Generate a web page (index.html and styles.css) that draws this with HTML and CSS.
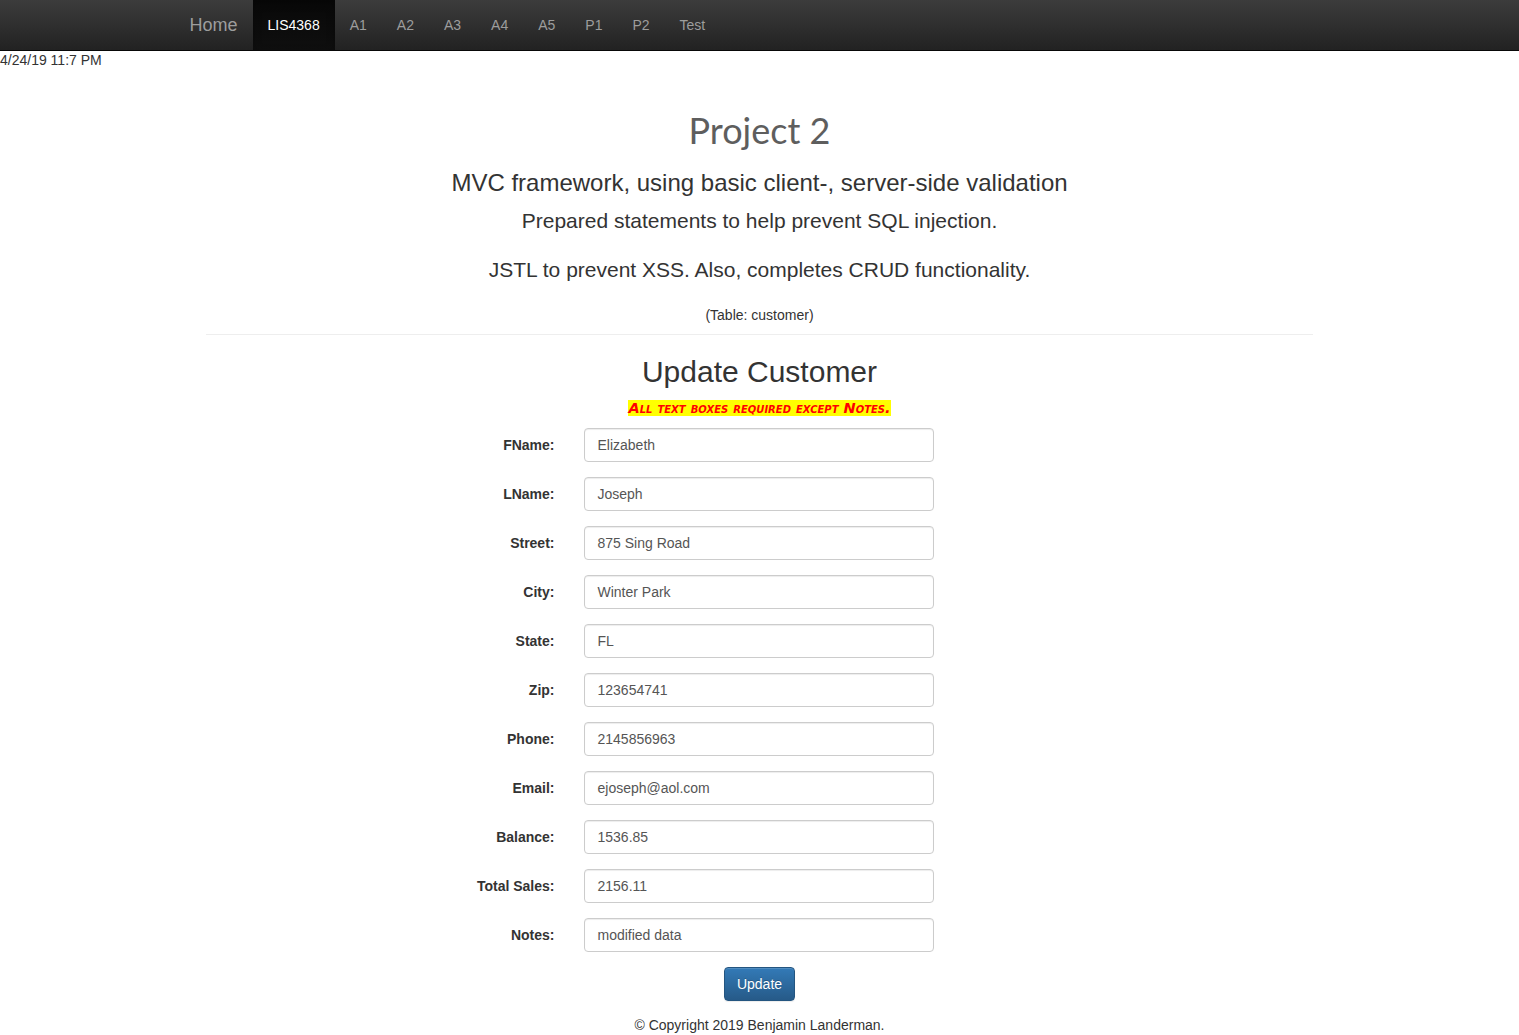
FILE: index.html
```html
<!DOCTYPE html>
<html lang="en">
<head>
<meta charset="utf-8">
<title>Project 2 - Update Customer</title>
<link rel="stylesheet" href="styles.css">
</head>
<body>
<nav class="navbar">
  <div class="container nav-inner">
    <a class="brand" href="#">Home</a>
    <ul class="nav">
      <li class="active"><a href="#">LIS4368</a></li>
      <li><a href="#">A1</a></li>
      <li><a href="#">A2</a></li>
      <li><a href="#">A3</a></li>
      <li><a href="#">A4</a></li>
      <li><a href="#">A5</a></li>
      <li><a href="#">P1</a></li>
      <li><a href="#">P2</a></li>
      <li><a href="#">Test</a></li>
    </ul>
  </div>
</nav>
<div class="date">4/24/19 11:7 PM</div>
<main class="container">
  <div class="intro">
    <h1 class="title">Project 2</h1>
    <h2 class="lead-a">MVC framework, using basic client-, server-side validation</h2>
    <h3 class="lead-b">Prepared statements to help prevent SQL injection.</h3>
    <h3 class="lead-c">JSTL to prevent XSS. Also, completes CRUD functionality.</h3>
    <p class="table-note">(Table: customer)</p>
  </div>
  <hr class="divider">
  <h2 class="form-title">Update Customer</h2>
  <p class="notice"><span class="notice-text">All text boxes required except Notes.</span></p>
  <form class="form">
    <div class="row"><label class="lbl">FName:</label><div class="field"><input class="input" value="Elizabeth"></div></div>
    <div class="row"><label class="lbl">LName:</label><div class="field"><input class="input" value="Joseph"></div></div>
    <div class="row"><label class="lbl">Street:</label><div class="field"><input class="input" value="875 Sing Road"></div></div>
    <div class="row"><label class="lbl">City:</label><div class="field"><input class="input" value="Winter Park"></div></div>
    <div class="row"><label class="lbl">State:</label><div class="field"><input class="input" value="FL"></div></div>
    <div class="row"><label class="lbl">Zip:</label><div class="field"><input class="input" value="123654741"></div></div>
    <div class="row"><label class="lbl">Phone:</label><div class="field"><input class="input" value="2145856963"></div></div>
    <div class="row"><label class="lbl">Email:</label><div class="field"><input class="input" value="ejoseph@aol.com"></div></div>
    <div class="row"><label class="lbl">Balance:</label><div class="field"><input class="input" value="1536.85"></div></div>
    <div class="row"><label class="lbl">Total Sales:</label><div class="field"><input class="input" value="2156.11"></div></div>
    <div class="row"><label class="lbl">Notes:</label><div class="field"><input class="input" value="modified data"></div></div>
    <div class="actions"><button type="button" class="btn">Update</button></div>
  </form>
  <footer class="footer">© Copyright 2019 Benjamin Landerman.</footer>
</main>
</body>
</html>
```
FILE: styles.css
```css
* { box-sizing: border-box; }
html, body { margin: 0; padding: 0; }
body {
  font-family: "Liberation Sans", Arial, sans-serif;
  font-size: 14px;
  line-height: 20px;
  color: #333;
  background: #fff;
}
.container {
  width: 1170px;
  margin: 0 auto;
  padding: 0 15px;
}
.navbar {
  height: 51px;
  background: linear-gradient(to bottom, #3c3c3c 0, #222 100%);
  border-bottom: 1px solid #080808;
}
.nav-inner {
  display: flex;
  height: 50px;
}
.brand {
  margin-left: -15px;
  padding: 15px;
  font-size: 18px;
  line-height: 20px;
  color: #9d9d9d;
  text-decoration: none;
}
.nav {
  display: flex;
  list-style: none;
  margin: 0;
  padding: 0;
}
.nav a {
  display: block;
  padding: 15px;
  line-height: 20px;
  color: #9d9d9d;
  text-decoration: none;
}
.nav .active a {
  color: #fff;
  background: linear-gradient(to bottom, #080808 0, #0f0f0f 100%);
  box-shadow: inset 0 3px 9px rgba(0,0,0,.25);
}
.date {
  line-height: 18px;
  font-size: 14px;
  color: #333;
}
.intro { text-align: center; }
.title {
  margin: 41px 0 0;
  font-family: Lato, "Open Sans", sans-serif;
  font-weight: 400;
  font-size: 36px;
  line-height: 40px;
  color: #5e5e5e;
}
.lead-a {
  margin: 18px 0 0;
  font-size: 24px;
  font-weight: 400;
  line-height: 30px;
}
.lead-b {
  margin: 10px 0 0;
  font-size: 21px;
  font-weight: 400;
  line-height: 26px;
}
.lead-c {
  margin: 23px 0 0;
  font-size: 21px;
  font-weight: 400;
  line-height: 26px;
}
.table-note {
  margin: 22px 0 0;
  line-height: 20px;
}
.divider {
  width: 1107px;
  margin: 9px auto 0;
  border: 0;
  border-top: 1px solid #eee;
  height: 0;
}
.form-title {
  margin: 20px 0 0;
  text-align: center;
  font-size: 30px;
  font-weight: 400;
  line-height: 34px;
}
.notice {
  margin: 10px 0 0;
  text-align: center;
  line-height: 18px;
}
.notice-text {
  background: #ff0;
  color: #f00;
  font-family: "DejaVu Sans", Verdana, sans-serif;
  font-weight: bold;
  font-style: italic;
  font-variant: small-caps;
  font-size: 14.5px;
}
.form {
  margin-top: 11px;
}
.row {
  display: flex;
  align-items: center;
  height: 34px;
  margin-bottom: 15px;
}
.lbl {
  width: 33.3333%;
  padding: 0 15px;
  text-align: right;
  font-weight: bold;
}
.field {
  padding: 0 15px;
}
.input {
  display: block;
  width: 350px;
  height: 34px;
  padding: 6px 12px;
  font-family: "Liberation Sans", Arial, sans-serif;
  font-size: 14px;
  line-height: 20px;
  color: #555;
  background: #fff;
  border: 1px solid #ccc;
  border-radius: 4px;
  box-shadow: inset 0 1px 1px rgba(0,0,0,.075);
}
.actions {
  display: flex;
  justify-content: center;
  margin-top: 15px;
}
.btn {
  height: 34px;
  padding: 6px 12px;
  font-family: "Liberation Sans", Arial, sans-serif;
  font-size: 14px;
  line-height: 20px;
  color: #fff;
  background: linear-gradient(to bottom, #337ab7 0, #265a88 100%);
  border: 1px solid #245580;
  border-radius: 4px;
  box-shadow: inset 0 1px 0 rgba(255,255,255,.15), 0 1px 1px rgba(0,0,0,.075);
  text-shadow: 0 -1px 0 rgba(0,0,0,.2);
}
.footer {
  margin-top: 14px;
  text-align: center;
  line-height: 20px;
}
```
